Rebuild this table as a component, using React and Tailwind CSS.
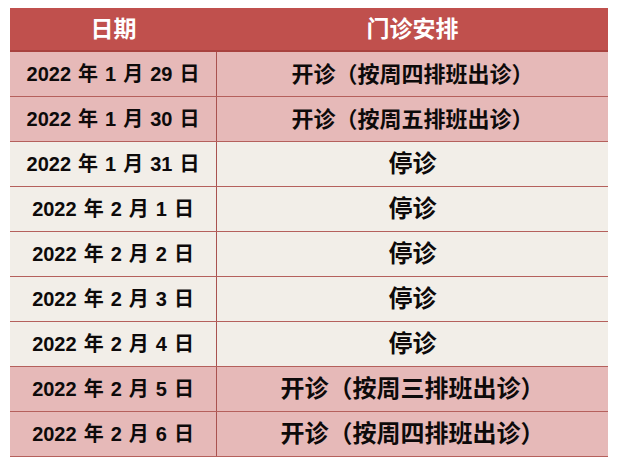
const rows = [
    { date: ['2022', '1', '29'], text: '开诊（按周四排班出诊）', tone: 'pink', size: 'small' },
    { date: ['2022', '1', '30'], text: '开诊（按周五排班出诊）', tone: 'pink', size: 'small' },
    { date: ['2022', '1', '31'], text: '停诊', tone: 'cream' },
    { date: ['2022', '2', '1'], text: '停诊', tone: 'cream' },
    { date: ['2022', '2', '2'], text: '停诊', tone: 'cream' },
    { date: ['2022', '2', '3'], text: '停诊', tone: 'cream' },
    { date: ['2022', '2', '4'], text: '停诊', tone: 'cream' },
    { date: ['2022', '2', '5'], text: '开诊（按周三排班出诊）', tone: 'pink' },
    { date: ['2022', '2', '6'], text: '开诊（按周四排班出诊）', tone: 'pink' },
];

export default function App() {
    return (
        <div
            className="w-[620px] h-[470px] bg-white pt-[8px] pl-[10px]"
            style={{ fontFamily: '"Liberation Sans", "Noto Sans CJK SC", sans-serif' }}
        >
            <div className="w-[598px] font-bold">
                {/* Header */}
                <div className="grid grid-cols-[207px_1fr] h-[44px] bg-[#c0504d] text-white text-[23px] border-b-2 border-[#a8423f]">
                    <div className="flex items-center justify-center">日期</div>
                    <div className="flex items-center justify-center">门诊安排</div>
                </div>

                {/* Rows */}
                {rows.map((r, i) => (
                    <div
                        key={i}
                        className={
                            'grid grid-cols-[207px_1fr] h-[45px] text-[#0d0a0a] border-b border-[#b5605c] ' +
                            (r.tone === 'pink' ? 'bg-[#e6b9b8]' : 'bg-[#f2eee8]')
                        }
                    >
                        <div className="flex items-center justify-center gap-[7px] text-[20px] border-r border-[#a9524f]">
                            <span>{r.date[0]}</span>
                            <span>年</span>
                            <span>{r.date[1]}</span>
                            <span>月</span>
                            <span>{r.date[2]}</span>
                            <span>日</span>
                        </div>
                        <div
                            className={
                                'flex items-center justify-center ' +
                                (r.size === 'small' ? 'text-[22px]' : 'text-[24px]')
                            }
                        >
                            {r.text}
                        </div>
                    </div>
                ))}
            </div>
        </div>
    );
}
